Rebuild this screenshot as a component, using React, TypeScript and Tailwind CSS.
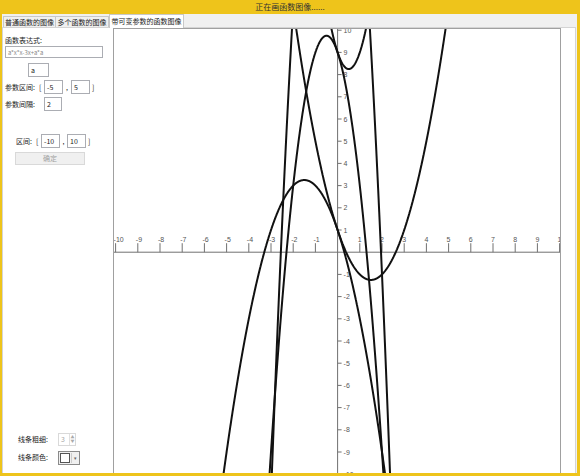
import React from 'react'

const S = 22.2
const OX = 223.6
const OY = 223.2
const PARAMS = [-5, -3, -1, 1, 3, 5]

// a*x*x-3x+a*a, sampled and cut where it leaves the view
function curvePath(a: number) {
  let d = ''
  let pen = false
  for (let i = 0; i <= 4000; i++) {
    const x = -10 + i * 0.005
    const y = a * x * x - 3 * x + a * a
    if (y > 14 || y < -14) {
      pen = false
      continue
    }
    const px = (OX + x * S).toFixed(2)
    const py = (OY - y * S).toFixed(2)
    d += (pen ? 'L' : 'M') + px + ' ' + py
    pen = true
  }
  return d
}

function Graph() {
  const ticks = Array.from({ length: 21 }, (_, i) => i - 10)
  return (
    <svg width={446} height={446} className="block">
      {/* axes */}
      <line x1={0} y1={OY} x2={446} y2={OY} stroke="#707070" strokeWidth={1} />
      <line x1={OX} y1={0} x2={OX} y2={446} stroke="#707070" strokeWidth={1} />
      {ticks.map(t =>
        t === 0 ? null : (
          <g key={'x' + t}>
            <line x1={OX + t * S} y1={OY - 9} x2={OX + t * S} y2={OY} stroke="#707070" strokeWidth={1} />
            <text x={OX + t * S - 2} y={OY - 10} fontSize={7} fill="#555" fontFamily="Liberation Sans, sans-serif">
              {t}
            </text>
          </g>
        )
      )}
      {ticks.map(t =>
        t === 0 ? null : (
          <g key={'y' + t}>
            <line x1={OX} y1={OY - t * S} x2={OX + 4} y2={OY - t * S} stroke="#707070" strokeWidth={1} />
            <text x={OX + 6} y={OY - t * S + 2.5} fontSize={7} fill="#555" fontFamily="Liberation Sans, sans-serif">
              {t}
            </text>
          </g>
        )
      )}
      {PARAMS.map(a => (
        <path key={a} d={curvePath(a)} fill="none" stroke="#111" strokeWidth={2} strokeLinejoin="round" />
      ))}
    </svg>
  )
}

function Box({ w, value, className = '' }: { w: string; value: string; className?: string }) {
  return (
    <div className={`${w} h-[14px] border border-[#abadb3] bg-white flex items-center pl-[2px] text-[7px] text-[#222] ${className}`}>
      {value}
    </div>
  )
}

export default function App() {
  return (
    <div className="w-[580px] h-[476px] bg-[#eec41b] flex flex-col font-['Noto_Sans_CJK_SC',sans-serif] overflow-hidden">
      {/* title bar */}
      <div className="h-[14px] flex items-center justify-center text-[8px] text-[#333] shrink-0">
        正在画函数图像......
      </div>

      <div className="flex-1 ml-[2px] mr-[3px] mb-[3px] bg-[#f0f0f0] flex flex-col min-h-0">
        {/* tabs */}
        <div className="h-[13px] flex items-end pl-[1px] shrink-0 text-[7px] text-[#222]">
          <div className="w-[53px] h-[11px] border border-b-0 border-[#c8c8c8] flex items-center justify-center">普通函数的图像</div>
          <div className="w-[53px] h-[11px] border border-b-0 border-l-0 border-[#c8c8c8] flex items-center justify-center">多个函数的图像</div>
          <div className="w-[75px] h-[14px] -mb-[1px] relative bg-white border border-b-0 border-[#c8c8c8] flex items-center justify-center">带可变参数的函数图像</div>
        </div>

        {/* tab page */}
        <div className="flex-1 bg-white border border-[#d4d4d4] border-b-0 flex min-h-0 mr-[1px]">
          <div className="w-[110px] flex flex-col pl-[2px] text-[7px] text-[#222] shrink-0">
            <div className="h-[10px] mt-[7px] flex items-center">函数表达式:</div>
            <div className="w-[98px] h-[12px] mt-[1px] border border-[#abadb3] flex items-center pl-[2px] text-[6px] text-[#888]">
              a*x*x-3x+a*a
            </div>
            <Box w="w-[21px]" value="a" className="ml-[23px] mt-[5px]" />
            <div className="flex items-center mt-[3px] h-[14px]">
              <span className="w-[34px]">参数区间:</span>
              <span className="w-[5px]">[</span>
              <Box w="w-[19px]" value="-5" />
              <span className="w-[8px] text-center">,</span>
              <Box w="w-[19px]" value="5" />
              <span className="ml-[2px]">]</span>
            </div>
            <div className="flex items-center mt-[3px] h-[14px]">
              <span className="w-[39px]">参数间隔:</span>
              <Box w="w-[18px]" value="2" />
            </div>
            <div className="flex items-center mt-[23px] h-[14px] pl-[11px]">
              <span className="w-[20px]">区间:</span>
              <span className="w-[5px]">[</span>
              <Box w="w-[19px]" value="-10" />
              <span className="w-[7px] text-center">,</span>
              <Box w="w-[19px]" value="10" />
              <span className="ml-[2px]">]</span>
            </div>
            <div className="w-[70px] h-[13px] ml-[10px] mt-[4px] border border-[#d9d9d9] bg-[#f0f0f0] flex items-center justify-center text-[#a0a0a0]">
              确定
            </div>

            <div className="flex-1" />

            <div className="flex items-center h-[14px] pl-[13px]">
              <span className="w-[40px]">线条粗细:</span>
              <div className="w-[18px] h-[13px] border border-[#d9d9d9] flex items-center text-[#aaa]">
                <span className="flex-1 pl-[2px]">3</span>
                <div className="w-[6px] h-full border-l border-[#e0e0e0] flex flex-col text-[4px] leading-none items-center justify-center">
                  <span>▲</span>
                  <span>▼</span>
                </div>
              </div>
            </div>
            <div className="flex items-center h-[15px] mt-[4px] mb-[8px] pl-[13px]">
              <span className="w-[40px]">线条颜色:</span>
              <div className="w-[22px] h-[14px] border border-[#8a8a8a] bg-[#f0f0f0] flex items-center pl-[1px] gap-[1px]">
                <div className="w-[10px] h-[10px] border border-[#555] bg-white" />
                <div className="flex-1 h-[10px] border-l border-[#ccc] flex items-center justify-center text-[5px] text-[#666]">▾</div>
              </div>
            </div>
          </div>

          <div className="w-[448px] border border-b-0 border-[#a0a0a0] overflow-hidden shrink-0">
            <Graph />
          </div>
        </div>
      </div>
    </div>
  )
}
